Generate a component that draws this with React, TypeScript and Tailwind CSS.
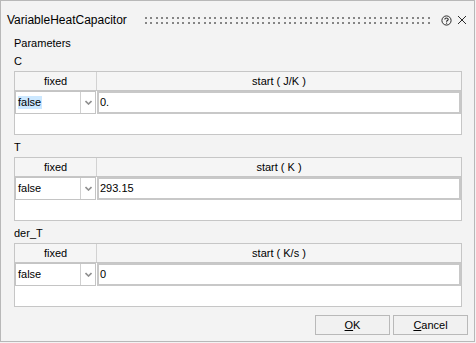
import React from "react";

function Chevron() {
  return (
    <svg width="7" height="5" viewBox="0 0 7 5">
      <path d="M0.5 1 L3.5 4 L6.5 1" fill="none" stroke="#8f8f8f" strokeWidth="1.6" />
    </svg>
  );
}

function ParamTable({ unit, value, selected }: { unit: string; value: string; selected?: boolean }) {
  return (
    <div className="ml-[13px] w-[448px] h-[64px] border border-[#c6c6c6] bg-white flex flex-col">
      <div className="h-[19px] shrink-0 flex bg-[#f5f5f5] border-b border-[#c6c6c6]">
        <div className="w-[82px] border-r border-[#d2d2d2] flex items-center justify-center">fixed</div>
        <div className="flex-1 flex items-center justify-center">start ( {unit} )</div>
      </div>
      <div className="h-[23px] shrink-0 flex">
        <div className="w-[81px] border border-[#c4c4c4] bg-white flex">
          <div className="w-[64px] flex items-center pl-[2px]">
            <span className={selected ? "inline-block bg-[#cce8ff] h-[13px] leading-[13px] pr-[1px]" : "inline-block h-[13px] leading-[13px]"}>false</span>
          </div>
          <div className="flex-1 border-l border-[#d0d0d0] flex items-center justify-center">
            <Chevron />
          </div>
        </div>
        <div className="ml-[1px] flex-1 border-2 border-[#c8c8c8] flex items-center pl-[1px]">{value}</div>
      </div>
    </div>
  );
}

const dotXs = Array.from({ length: 54 }, (_, i) => Math.round(i * 5.333));

export default function App() {
  return (
    <div className="w-[476px] h-[343px] bg-[#f3f3f3] font-['Liberation_Sans',Arial,sans-serif] text-black text-[11px]">
      <div className="w-[475px] h-[342px] border border-[#b8b8b8] bg-[#f3f3f3] flex flex-col">
        <div className="h-[34px] shrink-0 pt-[4px] flex items-center pl-[6px]">
          <span className="text-[12px] leading-[16px] w-[123px]">VariableHeatCapacitor</span>
          <svg className="ml-[15px]" width="286" height="8" viewBox="0 0 286 8">
            {dotXs.map((x) => (
              <React.Fragment key={x}>
                <rect x={x} y="1" width="2" height="2" fill="#858585" />
                <rect x={x} y="6" width="2" height="2" fill="#858585" />
              </React.Fragment>
            ))}
          </svg>
          <svg className="ml-[10px]" width="11" height="11" viewBox="0 0 11 11">
            <circle cx="5.5" cy="5.5" r="4.6" fill="none" stroke="#2b2b2b" strokeWidth="1" />
            <path d="M3.8 4.4 C3.8 2.6 7.2 2.6 7.2 4.4 C7.2 5.5 5.5 5.4 5.5 6.8" fill="none" stroke="#2b2b2b" strokeWidth="1.1" />
            <rect x="5" y="7.6" width="1.1" height="1.1" fill="#2b2b2b" />
          </svg>
          <svg className="ml-[5px]" width="10" height="10" viewBox="0 0 10 10">
            <path d="M1 1 L9 9 M9 1 L1 9" stroke="#2b2b2b" strokeWidth="1" />
          </svg>
        </div>
        <div className="pl-[13px] leading-[16px] h-[16px]">Parameters</div>
        <div className="pl-[13px] leading-[16px] h-[16px] mt-[2px]">C</div>
        <div className="mt-[2px]">
          <ParamTable unit="J/K" value="0." selected />
        </div>
        <div className="pl-[13px] leading-[16px] h-[16px] mt-[4px]">T</div>
        <div className="mt-[2px]">
          <ParamTable unit="K" value="293.15" />
        </div>
        <div className="pl-[13px] leading-[16px] h-[16px] mt-[4px]">der_T</div>
        <div className="mt-[2px]">
          <ParamTable unit="K/s" value="0" />
        </div>
        <div className="mt-[8px] flex justify-end gap-[3px] pr-[6px]">
          <button className="w-[75px] h-[20px] border border-[#b9b9b9] bg-[#f1f1f1] text-[11px] leading-[18px]">
            <u>O</u>K
          </button>
          <button className="w-[75px] h-[20px] border border-[#b9b9b9] bg-[#f1f1f1] text-[11px] leading-[18px]">
            <u>C</u>ancel
          </button>
        </div>
      </div>
    </div>
  );
}
